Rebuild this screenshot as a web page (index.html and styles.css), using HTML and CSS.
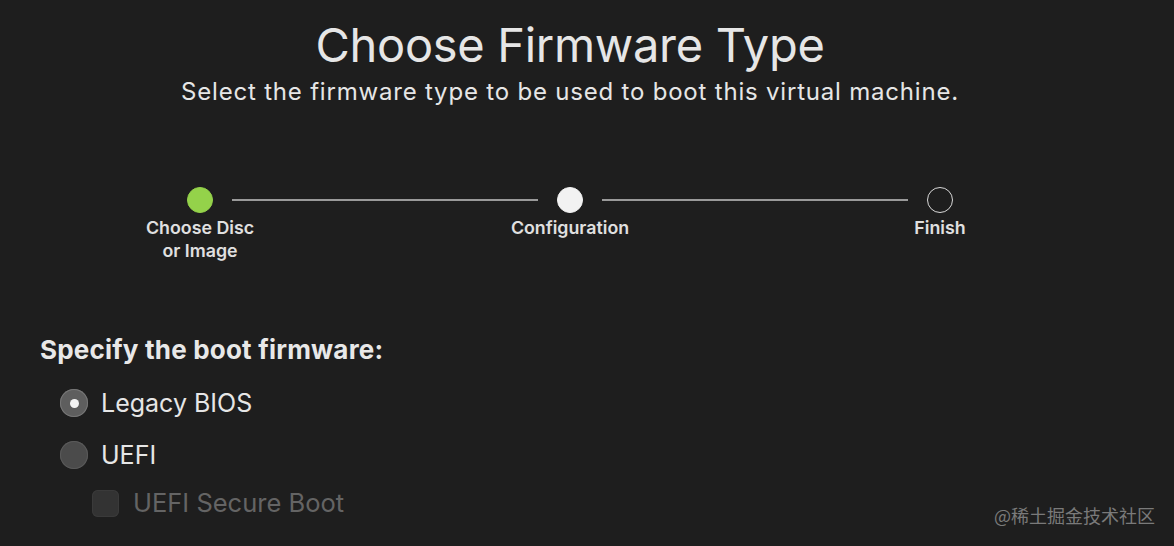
FILE: index.html
```html
<!DOCTYPE html>
<html lang="en">
<head>
<meta charset="UTF-8">
<title>Choose Firmware Type</title>
<meta name="viewport" content="width=device-width,initial-scale=1">
<link rel="stylesheet" href="styles.css">
</head>
<body>
<main class="wizard">
  <header class="intro">
    <h1>Choose Firmware Type</h1>
    <p>Select the firmware type to be used to boot this virtual machine.</p>
  </header>

  <!-- progress steps -->
  <ol class="steps">
    <li class="step done"><span class="dot"></span><span class="label">Choose Disc<br>or Image</span></li>
    <li class="bar"></li>
    <li class="step current"><span class="dot"></span><span class="label">Configuration</span></li>
    <li class="bar"></li>
    <li class="step"><span class="dot"></span><span class="label">Finish</span></li>
  </ol>

  <section class="firmware">
    <h2>Specify the boot firmware:</h2>
    <label class="opt"><span class="radio on"></span>Legacy BIOS</label>
    <label class="opt"><span class="radio"></span>UEFI</label>
    <label class="opt sub disabled"><span class="check"></span>UEFI Secure Boot</label>
  </section>
</main>
<div class="mark">@稀土掘金技术社区</div>
</body>
</html>
```

FILE: styles.css
```css
:root{
  --bg:#1e1e1e;--fg:#e6e6e6;--line:#9a9a9a;--green:#94d24a;
}
*{box-sizing:border-box;margin:0;padding:0}
html,body{height:100%}
body{background:var(--bg);color:var(--fg);font-family:Inter,"Liberation Sans",sans-serif;overflow:hidden;position:relative}
.wizard{width:1140px}
.intro{text-align:center;padding-top:16px}
.intro h1{font-size:47px;font-weight:400;line-height:58px;letter-spacing:-.3px}
.intro p{font-size:24px;line-height:28px;margin-top:4px;letter-spacing:.8px}

/* stepper */
.steps{list-style:none;display:flex;align-items:flex-start;width:766px;margin:81px auto 0}
.step{width:26px;display:flex;flex-direction:column;align-items:center}
.dot{width:26px;height:26px;border-radius:50%;border:1.5px solid #d8d8d8}
.done .dot{background:var(--green);border-color:var(--green)}
.current .dot{background:#f2f2f2;border-color:#f2f2f2}
.label{width:150px;margin:3px -62px 0;text-align:center;font-size:17.8px;font-weight:600;line-height:23px;color:#e0e0e0}
.bar{flex:1;height:2px;background:var(--line);margin:12px 19px 0}

/* firmware options */
.firmware{padding:74px 0 0 40px}
.firmware h2{font-size:26px;font-weight:700;line-height:28px;color:#e8e8e8;letter-spacing:.2px}
.opt{display:flex;align-items:center;gap:13px;font-size:25px;line-height:30px;margin-top:22px;padding-left:20px}
.opt:first-of-type{margin-top:24px}
.radio{width:28px;height:28px;border-radius:50%;background:#4b4b4b;box-shadow:inset 0 0 0 1px #5a5a5a;display:grid;place-items:center}
.radio.on{background:#5e5e5e;box-shadow:inset 0 0 0 1px #777}
.radio.on::after{content:"";width:9px;height:9px;border-radius:50%;background:#f4f4f4}
.opt.sub{padding-left:52px;margin-top:18px;gap:14px;font-size:25.5px}
.check{width:27px;height:27px;border-radius:6px;background:#333;box-shadow:inset 0 0 0 1px #3a3a3a}
.disabled{color:#646464}

.mark{position:absolute;right:19px;bottom:18px;font-family:"Noto Sans CJK SC",sans-serif;font-size:18px;color:#7a7a7a}
```
